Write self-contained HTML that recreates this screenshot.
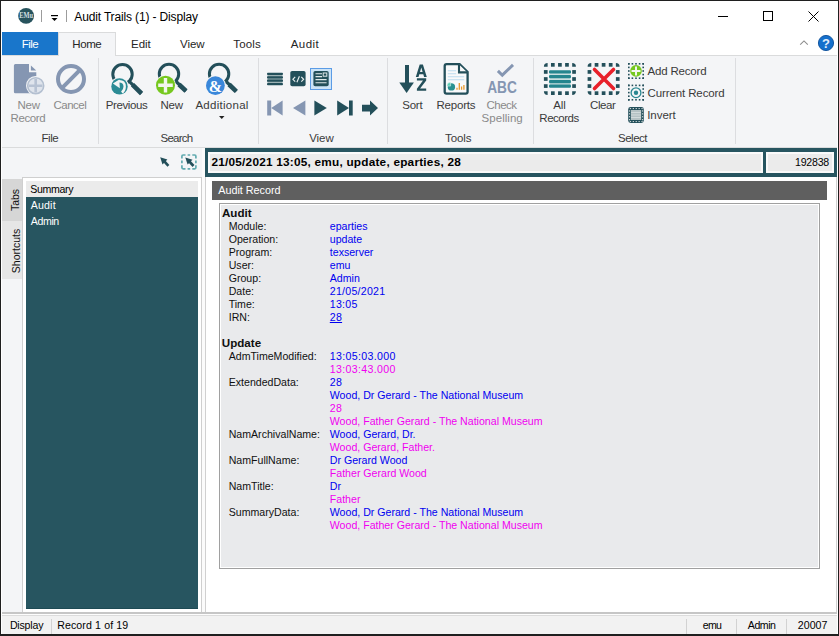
<!DOCTYPE html>
<html><head><meta charset="utf-8">
<style>
*{margin:0;padding:0;box-sizing:border-box}
html,body{width:839px;height:636px;overflow:hidden;background:#fff}
body{font-family:"Liberation Sans",sans-serif;position:relative}
.t{position:absolute;white-space:nowrap}
svg.t{overflow:visible}
</style></head><body>
<div class="t" style="left:0px;top:0px;width:839px;height:32px;background:#fff;"></div>
<svg class="t" style="left:0px;top:0px" width="40" height="30" viewBox="0 0 40 30"><circle cx="26.1" cy="15.9" r="7.9" fill="#27535d"/><text x="19.2" y="17.9" font-family="Liberation Serif" font-size="7.2" font-weight="bold" fill="#d3dfe1" textLength="13.8" lengthAdjust="spacingAndGlyphs">EMu</text></svg>
<div class="t" style="left:41px;top:10px;width:1px;height:12px;background:#9c9c9c;"></div>
<svg class="t" style="left:50px;top:13px" width="10" height="10" viewBox="0 0 10 10"><rect x="1" y="2" width="7" height="1.2" fill="#000"/><path d="M1.5 5 L7.5 5 L4.5 8 Z" fill="#000"/></svg>
<div class="t" style="left:66px;top:10px;width:1px;height:12px;background:#9c9c9c;"></div>
<div class="t" style="left:74.30px;top:11.00px;font-size:12px;line-height:12px;letter-spacing:-0.147px;color:#000;">Audit Trails (1) - Display</div>
<div class="t" style="left:718px;top:16px;width:10px;height:1px;background:#000;"></div>
<div class="t" style="left:763px;top:11px;width:10px;height:10px;background:transparent;border:1px solid #000;"></div>
<svg class="t" style="left:808px;top:11px" width="11" height="11" viewBox="0 0 11 11"><path d="M0.5 0.5 L10.5 10.5 M10.5 0.5 L0.5 10.5" stroke="#000" stroke-width="1"/></svg>
<div class="t" style="left:2px;top:32px;width:56px;height:23px;background:#1976cb;"></div>
<div class="t" style="left:21.70px;top:39.00px;font-size:11.5px;line-height:11.5px;letter-spacing:-0.509px;color:#fff;">File</div>
<div class="t" style="left:58px;top:32px;width:58px;height:24px;background:#f4f5f7;border:1px solid #dadbdc;border-bottom:none;"></div>
<div class="t" style="left:72.30px;top:39.00px;font-size:11.5px;line-height:11.5px;letter-spacing:-0.427px;color:#262626;">Home</div>
<div class="t" style="left:131.00px;top:39.00px;font-size:11.5px;line-height:11.5px;letter-spacing:-0.038px;color:#262626;">Edit</div>
<div class="t" style="left:180.00px;top:39.00px;font-size:11.5px;line-height:11.5px;letter-spacing:-0.016px;color:#262626;">View</div>
<div class="t" style="left:233.30px;top:39.00px;font-size:11.5px;line-height:11.5px;letter-spacing:0.140px;color:#262626;">Tools</div>
<div class="t" style="left:290.70px;top:39.00px;font-size:11.5px;line-height:11.5px;letter-spacing:0.448px;color:#262626;">Audit</div>
<svg class="t" style="left:0px;top:0px" width="839" height="60" viewBox="0 0 839 60"><path d="M800.2 44.6 L804 40.9 L807.8 44.6" stroke="#8c8c8c" stroke-width="1.1" fill="none"/></svg>
<svg class="t" style="left:817px;top:35px" width="18" height="18" viewBox="0 0 18 18"><circle cx="9" cy="8" r="7.6" fill="#1570cc" stroke="#0c4f9a" stroke-width="0.9"/><text x="9" y="12.6" font-size="13" font-weight="bold" fill="#e3eefa" text-anchor="middle">?</text></svg>
<div class="t" style="left:2px;top:55px;width:835px;height:93px;background:#f4f5f7;border-top:1px solid #dadbdc;border-bottom:1px solid #dadbdc;"></div>
<div class="t" style="left:1px;top:32px;width:1px;height:603px;background:#fff;"></div>
<div class="t" style="left:837px;top:32px;width:1px;height:603px;background:#fff;"></div>
<div class="t" style="left:98px;top:58px;width:1px;height:86px;background:#dcdde0;"></div>
<div class="t" style="left:258px;top:58px;width:1px;height:86px;background:#dcdde0;"></div>
<div class="t" style="left:387px;top:58px;width:1px;height:86px;background:#dcdde0;"></div>
<div class="t" style="left:533px;top:58px;width:1px;height:86px;background:#dcdde0;"></div>
<div class="t" style="left:735px;top:58px;width:1px;height:86px;background:#dcdde0;"></div>
<div class="t" style="left:59px;top:55px;width:56px;height:1px;background:#f4f5f7;"></div>
<svg class="t" style="left:12px;top:62px" width="36" height="36" viewBox="0 0 36 36"><path d="M3.4 2 H17 V10.2 H24.3 V31.2 H3.4 Q1.9 31.2 1.9 29.7 V3.5 Q1.9 2 3.4 2 Z" fill="#8596b2"/>
<path d="M18.9 3.4 L24.2 8.5 H18.9 Z" fill="#8596b2"/>
<circle cx="23.7" cy="23.7" r="9.7" fill="#f4f5f7"/><circle cx="23.7" cy="23.7" r="8" fill="#dfe4ec" stroke="#b3bfd0" stroke-width="1.6"/>
<path d="M23.7 17 V30.4 M17 23.7 H30.4" stroke="#b7c2d3" stroke-width="2.6"/></svg>
<svg class="t" style="left:55px;top:63px" width="32" height="32" viewBox="0 0 32 32"><circle cx="16" cy="16" r="13" fill="none" stroke="#8596b2" stroke-width="4"/><path d="M7.2 24.8 L24.8 7.2" stroke="#8596b2" stroke-width="4"/></svg>
<div class="t" style="left:17.60px;top:100.00px;font-size:11.5px;line-height:11.5px;letter-spacing:-0.317px;color:#8a8a8a;">New</div>
<div class="t" style="left:10.50px;top:113.00px;font-size:11.5px;line-height:11.5px;letter-spacing:-0.395px;color:#8a8a8a;">Record</div>
<div class="t" style="left:53.50px;top:100.00px;font-size:11.5px;line-height:11.5px;letter-spacing:-0.520px;color:#8a8a8a;">Cancel</div>
<div class="t" style="left:41.50px;top:133.00px;font-size:11.5px;line-height:11.5px;letter-spacing:-0.475px;color:#3a3a3a;">File</div>
<svg class="t" style="left:0px;top:0px" width="260" height="100" viewBox="0 0 260 100"><circle cx="122.5" cy="74.2" r="9.7" fill="none" stroke="#234f5a" stroke-width="3"/><path d="M128.5 80.7 L141.5 93.5" stroke="#234f5a" stroke-width="3.2"/><path d="M132.5 84.7 L141.5 93.5" stroke="#234f5a" stroke-width="4.6"/><circle cx="119.5" cy="86.4" r="9.3" fill="#f4f5f7"/><circle cx="119.5" cy="86.4" r="8.2" fill="#2b8b95"/><path d="M112.9 83.5 L119.3 79.6 L119.8 88.3 Z" fill="#f4f6f6"/><path d="M119 81.3 Q124.6 81.2 124.7 86.6 Q124.6 90.6 121.8 92.6" fill="none" stroke="#f4f6f6" stroke-width="2.4"/></svg>
<svg class="t" style="left:0px;top:0px" width="260" height="100" viewBox="0 0 260 100"><circle cx="169" cy="74" r="9.7" fill="none" stroke="#234f5a" stroke-width="3"/><path d="M175 80.5 L186 91" stroke="#234f5a" stroke-width="3.2"/><path d="M179 84.5 L186 91" stroke="#234f5a" stroke-width="4.6"/><circle cx="165.5" cy="85.3" r="10.5" fill="#f4f5f7"/><circle cx="165.5" cy="85.3" r="9.5" fill="#76c81f"/><path d="M165.5 78 V92.6 M158.2 85.3 H172.8" stroke="#f3f6ef" stroke-width="3.4"/></svg>
<svg class="t" style="left:0px;top:0px" width="260" height="100" viewBox="0 0 260 100"><circle cx="219.1" cy="74" r="9.7" fill="none" stroke="#234f5a" stroke-width="3"/><path d="M225.1 80.5 L236.3 91.4" stroke="#234f5a" stroke-width="3.2"/><path d="M229.1 84.5 L236.3 91.4" stroke="#234f5a" stroke-width="4.6"/><circle cx="215.4" cy="85.6" r="10.4" fill="#f4f5f7"/><circle cx="215.4" cy="85.6" r="9.4" fill="#3a87da"/><text x="215.4" y="91.5" font-family="Liberation Serif" font-size="16" font-weight="bold" fill="#fff" text-anchor="middle">&amp;</text></svg>
<div class="t" style="left:105.70px;top:100.00px;font-size:11.5px;line-height:11.5px;letter-spacing:-0.392px;color:#3a3a3a;">Previous</div>
<div class="t" style="left:160.50px;top:100.00px;font-size:11.5px;line-height:11.5px;letter-spacing:-0.267px;color:#3a3a3a;">New</div>
<div class="t" style="left:195.40px;top:100.00px;font-size:11.5px;line-height:11.5px;letter-spacing:0.277px;color:#3a3a3a;">Additional</div>
<svg class="t" style="left:218px;top:115px" width="8" height="5" viewBox="0 0 8 5"><path d="M1 1 H6.5 L3.75 4 Z" fill="#222"/></svg>
<div class="t" style="left:160.50px;top:133.00px;font-size:11.5px;line-height:11.5px;letter-spacing:-0.746px;color:#3a3a3a;">Search</div>
<svg class="t" style="left:0px;top:0px" width="400" height="130" viewBox="0 0 400 130"><rect x="267.5" y="74.5" width="15" height="9" fill="#9db2b5"/><rect x="267" y="72.8" width="16" height="2.2" rx="0.9" fill="#234f5a"/><rect x="267" y="76.2" width="16" height="2.2" rx="0.9" fill="#234f5a"/><rect x="267" y="79.6" width="16" height="2.2" rx="0.9" fill="#234f5a"/><rect x="267" y="83" width="16" height="2.2" rx="0.9" fill="#234f5a"/><rect x="290.3" y="71" width="15.3" height="15.3" rx="1.8" fill="#234f5a"/><path d="M295.2 76.9 L292.9 79.3 L295.2 81.7 M299.4 76.2 L296.9 82.3 M301.3 76.9 L303.6 79.3 L301.3 81.7" fill="none" stroke="#e8efef" stroke-width="1.15"/><rect x="310.5" y="68.5" width="21" height="21" fill="#cce3f7" stroke="#5b9ce6" stroke-width="1"/><rect x="313.4" y="71" width="15.3" height="15.3" rx="1.8" fill="#234f5a"/><path d="M315.5 73.8 H322 M315.5 76.6 H322 M315.5 79.6 H326.6 M315.5 82.8 H326.6" stroke="#e0e8e9" stroke-width="1.1"/><rect x="323.2" y="73" width="3.6" height="3.2" fill="none" stroke="#e0e8e9" stroke-width="1"/><rect x="267.2" y="100.5" width="4" height="15" fill="#8596b2"/><path d="M271.2 108 L282.6 100.5 V115.5 Z" fill="#8596b2"/><path d="M293 108 L305.4 100.5 V115.5 Z" fill="#8596b2"/><path d="M326.8 108 L314.4 100.5 V115.5 Z" fill="#234f5a"/><path d="M349 108 L337.2 100.5 V115.5 Z" fill="#234f5a"/><rect x="349" y="100.5" width="3.7" height="15" fill="#234f5a"/><path d="M362 104.7 H370 V100.5 L378 108 L370 115.5 V111.4 H362 Z" fill="#234f5a"/></svg>
<div class="t" style="left:309.20px;top:133.00px;font-size:11.5px;line-height:11.5px;letter-spacing:-0.049px;color:#3a3a3a;">View</div>
<svg class="t" style="left:0px;top:0px" width="540" height="130" viewBox="0 0 540 130"><rect x="405" y="65" width="4" height="19" fill="#234f5a"/><path d="M399.3 82.5 H413.9 L406.6 93 Z" fill="#234f5a"/><path fill-rule="evenodd" d="M415.8 76.9 L419.7 64.4 H422.9 L426.8 76.9 H424.1 L423.3 74.3 H419.3 L418.5 76.9 Z M420 71.9 H422.6 L421.3 67.4 Z" fill="#234f5a"/><path d="M416.9 78.3 H426.2 V80.4 L420.1 88.6 H426.2 V90.8 H416.9 V88.7 L423 80.5 H416.9 Z" fill="#234f5a"/><path d="M446.6 64.1 H459.6 L467.6 72 V91.8 Q467.6 93.7 465.7 93.7 H446.6 Q444.7 93.7 444.7 91.8 V66 Q444.7 64.1 446.6 64.1 Z" fill="#f8f9fa" stroke="#234f5a" stroke-width="2.3"/><path d="M459 64.5 V72.4 H467.4" fill="#f8f9fa" stroke="#234f5a" stroke-width="2.1"/><path d="M447.8 70.8 H456.2 M447.8 73.8 H456.2 M447.8 76.8 H464.2 M447.8 79.8 H464.2" stroke="#bcdcf0" stroke-width="1.1"/><circle cx="451.4" cy="86.9" r="3.7" fill="#2a9191"/><path d="M450.6 86.1 V82.3 A3.7 3.7 0 0 0 446.9 86.1 Z" fill="#5ccfb6" stroke="#f8f9fa" stroke-width="0.5"/><path d="M457 89.8 V87.8 M459.3 89.8 V83 M461.6 89.8 V86.4 M463.9 89.8 V85" stroke="#e8992e" stroke-width="1.3"/><path d="M497.9 70.9 L502.3 75.2 L513 64.9" fill="none" stroke="#8596b2" stroke-width="3"/><text x="487.2" y="92.9" font-size="15.8" font-weight="bold" fill="#8596b2" textLength="29.7" lengthAdjust="spacingAndGlyphs">ABC</text></svg>
<div class="t" style="left:402.20px;top:100.00px;font-size:11.5px;line-height:11.5px;letter-spacing:-0.197px;color:#3a3a3a;">Sort</div>
<div class="t" style="left:436.50px;top:100.00px;font-size:11.5px;line-height:11.5px;letter-spacing:-0.210px;color:#3a3a3a;">Reports</div>
<div class="t" style="left:486.60px;top:100.00px;font-size:11.5px;line-height:11.5px;letter-spacing:-0.554px;color:#8a8a8a;">Check</div>
<div class="t" style="left:481.60px;top:113.00px;font-size:11.5px;line-height:11.5px;letter-spacing:0.026px;color:#8a8a8a;">Spelling</div>
<div class="t" style="left:445.00px;top:133.00px;font-size:11.5px;line-height:11.5px;letter-spacing:-0.110px;color:#3a3a3a;">Tools</div>
<svg class="t" style="left:0px;top:0px" width="660" height="130" viewBox="0 0 660 130"><rect x="550.98" y="63" width="3.7" height="3.7" fill="#234f5a"/><rect x="550.98" y="91.3" width="3.7" height="3.7" fill="#234f5a"/><rect x="558.05" y="63" width="3.7" height="3.7" fill="#234f5a"/><rect x="558.05" y="91.3" width="3.7" height="3.7" fill="#234f5a"/><rect x="565.12" y="63" width="3.7" height="3.7" fill="#234f5a"/><rect x="565.12" y="91.3" width="3.7" height="3.7" fill="#234f5a"/><rect x="543.9" y="70.08" width="3.7" height="3.7" fill="#234f5a"/><rect x="572.1999999999999" y="70.08" width="3.7" height="3.7" fill="#234f5a"/><rect x="543.9" y="77.15" width="3.7" height="3.7" fill="#234f5a"/><rect x="572.1999999999999" y="77.15" width="3.7" height="3.7" fill="#234f5a"/><rect x="543.9" y="84.22" width="3.7" height="3.7" fill="#234f5a"/><rect x="572.1999999999999" y="84.22" width="3.7" height="3.7" fill="#234f5a"/><path d="M543.9 66.7 Q543.9 63 547.6 63 L547.6 66.7 Z" fill="#234f5a"/><path d="M575.9 66.7 Q575.9 63 572.1999999999999 63 L572.1999999999999 66.7 Z" fill="#234f5a"/><path d="M543.9 91.3 Q543.9 95 547.6 95 L547.6 91.3 Z" fill="#234f5a"/><path d="M575.9 91.3 Q575.9 95 572.1999999999999 95 L572.1999999999999 91.3 Z" fill="#234f5a"/><rect x="549.5" y="72" width="21" height="14" fill="#c9dfdf"/><rect x="549" y="70.2" width="22" height="3.3" rx="1.2" fill="#25868e"/><rect x="549" y="75" width="22" height="3.3" rx="1.2" fill="#25868e"/><rect x="549" y="80" width="22" height="3.3" rx="1.2" fill="#25868e"/><rect x="549" y="84.4" width="22" height="3.3" rx="1.2" fill="#25868e"/><rect x="594.68" y="63" width="3.7" height="3.7" fill="#234f5a"/><rect x="594.68" y="91.3" width="3.7" height="3.7" fill="#234f5a"/><rect x="601.75" y="63" width="3.7" height="3.7" fill="#234f5a"/><rect x="601.75" y="91.3" width="3.7" height="3.7" fill="#234f5a"/><rect x="608.83" y="63" width="3.7" height="3.7" fill="#234f5a"/><rect x="608.83" y="91.3" width="3.7" height="3.7" fill="#234f5a"/><rect x="587.6" y="70.08" width="3.7" height="3.7" fill="#234f5a"/><rect x="615.9" y="70.08" width="3.7" height="3.7" fill="#234f5a"/><rect x="587.6" y="77.15" width="3.7" height="3.7" fill="#234f5a"/><rect x="615.9" y="77.15" width="3.7" height="3.7" fill="#234f5a"/><rect x="587.6" y="84.22" width="3.7" height="3.7" fill="#234f5a"/><rect x="615.9" y="84.22" width="3.7" height="3.7" fill="#234f5a"/><path d="M587.6 66.7 Q587.6 63 591.3000000000001 63 L591.3000000000001 66.7 Z" fill="#234f5a"/><path d="M619.6 66.7 Q619.6 63 615.9 63 L615.9 66.7 Z" fill="#234f5a"/><path d="M587.6 91.3 Q587.6 95 591.3000000000001 95 L591.3000000000001 91.3 Z" fill="#234f5a"/><path d="M619.6 91.3 Q619.6 95 615.9 95 L615.9 91.3 Z" fill="#234f5a"/><path d="M594.5 69.5 L613.5 88.5 M613.5 69.5 L594.5 88.5" stroke="#e8202a" stroke-width="3.6" stroke-linecap="round"/><rect x="628.00" y="63" width="1.6" height="1.6" fill="#234f5a"/><rect x="628.00" y="77.4" width="1.6" height="1.6" fill="#234f5a"/><rect x="631.60" y="63" width="1.6" height="1.6" fill="#234f5a"/><rect x="631.60" y="77.4" width="1.6" height="1.6" fill="#234f5a"/><rect x="635.20" y="63" width="1.6" height="1.6" fill="#234f5a"/><rect x="635.20" y="77.4" width="1.6" height="1.6" fill="#234f5a"/><rect x="638.80" y="63" width="1.6" height="1.6" fill="#234f5a"/><rect x="638.80" y="77.4" width="1.6" height="1.6" fill="#234f5a"/><rect x="642.40" y="63" width="1.6" height="1.6" fill="#234f5a"/><rect x="642.40" y="77.4" width="1.6" height="1.6" fill="#234f5a"/><rect x="628" y="63.00" width="1.6" height="1.6" fill="#234f5a"/><rect x="642.4" y="63.00" width="1.6" height="1.6" fill="#234f5a"/><rect x="628" y="66.60" width="1.6" height="1.6" fill="#234f5a"/><rect x="642.4" y="66.60" width="1.6" height="1.6" fill="#234f5a"/><rect x="628" y="70.20" width="1.6" height="1.6" fill="#234f5a"/><rect x="642.4" y="70.20" width="1.6" height="1.6" fill="#234f5a"/><rect x="628" y="73.80" width="1.6" height="1.6" fill="#234f5a"/><rect x="642.4" y="73.80" width="1.6" height="1.6" fill="#234f5a"/><rect x="628" y="77.40" width="1.6" height="1.6" fill="#234f5a"/><rect x="642.4" y="77.40" width="1.6" height="1.6" fill="#234f5a"/><circle cx="636" cy="70.9" r="5.8" fill="#76c81f"/><path d="M636 66.4 V75.4 M631.5 70.9 H640.5" stroke="#f3f6ef" stroke-width="2"/><rect x="628.00" y="84.6" width="1.6" height="1.6" fill="#234f5a"/><rect x="628.00" y="99.0" width="1.6" height="1.6" fill="#234f5a"/><rect x="631.60" y="84.6" width="1.6" height="1.6" fill="#234f5a"/><rect x="631.60" y="99.0" width="1.6" height="1.6" fill="#234f5a"/><rect x="635.20" y="84.6" width="1.6" height="1.6" fill="#234f5a"/><rect x="635.20" y="99.0" width="1.6" height="1.6" fill="#234f5a"/><rect x="638.80" y="84.6" width="1.6" height="1.6" fill="#234f5a"/><rect x="638.80" y="99.0" width="1.6" height="1.6" fill="#234f5a"/><rect x="642.40" y="84.6" width="1.6" height="1.6" fill="#234f5a"/><rect x="642.40" y="99.0" width="1.6" height="1.6" fill="#234f5a"/><rect x="628" y="84.60" width="1.6" height="1.6" fill="#234f5a"/><rect x="642.4" y="84.60" width="1.6" height="1.6" fill="#234f5a"/><rect x="628" y="88.20" width="1.6" height="1.6" fill="#234f5a"/><rect x="642.4" y="88.20" width="1.6" height="1.6" fill="#234f5a"/><rect x="628" y="91.80" width="1.6" height="1.6" fill="#234f5a"/><rect x="642.4" y="91.80" width="1.6" height="1.6" fill="#234f5a"/><rect x="628" y="95.40" width="1.6" height="1.6" fill="#234f5a"/><rect x="642.4" y="95.40" width="1.6" height="1.6" fill="#234f5a"/><rect x="628" y="99.00" width="1.6" height="1.6" fill="#234f5a"/><rect x="642.4" y="99.00" width="1.6" height="1.6" fill="#234f5a"/><circle cx="636" cy="92.7" r="4.9" fill="none" stroke="#2a8791" stroke-width="1.3"/><circle cx="636" cy="92.7" r="2.2" fill="#2a8791"/><rect x="628.2" y="107" width="15.6" height="16" rx="2.4" fill="#234f5a"/><rect x="630.8" y="110" width="10.4" height="10" fill="#b4c1c3"/><path d="M631 112.5 H641 M631 115 H641 M631 117.5 H641" stroke="#d2dadb" stroke-width="1"/></svg>
<svg class="t" style="left:0px;top:0px" width="660" height="130" viewBox="0 0 660 130"><rect x="629.80" y="108" width="1.3" height="1.1" fill="#c8d2d3"/><rect x="629.80" y="121" width="1.3" height="1.1" fill="#c8d2d3"/><rect x="632.70" y="108" width="1.3" height="1.1" fill="#c8d2d3"/><rect x="632.70" y="121" width="1.3" height="1.1" fill="#c8d2d3"/><rect x="635.60" y="108" width="1.3" height="1.1" fill="#c8d2d3"/><rect x="635.60" y="121" width="1.3" height="1.1" fill="#c8d2d3"/><rect x="638.50" y="108" width="1.3" height="1.1" fill="#c8d2d3"/><rect x="638.50" y="121" width="1.3" height="1.1" fill="#c8d2d3"/><rect x="641.40" y="108" width="1.3" height="1.1" fill="#c8d2d3"/><rect x="641.40" y="121" width="1.3" height="1.1" fill="#c8d2d3"/><rect x="629" y="110.30" width="1.1" height="1.3" fill="#c8d2d3"/><rect x="642" y="110.30" width="1.1" height="1.3" fill="#c8d2d3"/><rect x="629" y="113.20" width="1.1" height="1.3" fill="#c8d2d3"/><rect x="642" y="113.20" width="1.1" height="1.3" fill="#c8d2d3"/><rect x="629" y="116.10" width="1.1" height="1.3" fill="#c8d2d3"/><rect x="642" y="116.10" width="1.1" height="1.3" fill="#c8d2d3"/><rect x="629" y="119.00" width="1.1" height="1.3" fill="#c8d2d3"/><rect x="642" y="119.00" width="1.1" height="1.3" fill="#c8d2d3"/></svg>
<div class="t" style="left:553.30px;top:100.00px;font-size:11.5px;line-height:11.5px;letter-spacing:-0.138px;color:#3a3a3a;">All</div>
<div class="t" style="left:539.30px;top:113.00px;font-size:11.5px;line-height:11.5px;letter-spacing:-0.471px;color:#3a3a3a;">Records</div>
<div class="t" style="left:590.00px;top:100.00px;font-size:11.5px;line-height:11.5px;letter-spacing:-0.421px;color:#3a3a3a;">Clear</div>
<div class="t" style="left:618.00px;top:133.00px;font-size:11.5px;line-height:11.5px;letter-spacing:-0.492px;color:#3a3a3a;">Select</div>
<div class="t" style="left:647.50px;top:66.00px;font-size:11.5px;line-height:11.5px;letter-spacing:-0.181px;color:#3a3a3a;">Add Record</div>
<div class="t" style="left:647.50px;top:88.00px;font-size:11.5px;line-height:11.5px;letter-spacing:-0.109px;color:#3a3a3a;">Current Record</div>
<div class="t" style="left:647.20px;top:110.00px;font-size:11.5px;line-height:11.5px;letter-spacing:-0.032px;color:#3a3a3a;">Invert</div>
<div class="t" style="left:2px;top:148px;width:200px;height:465px;background:#f4f5f7;"></div>
<svg class="t" style="left:0px;top:0px" width="200" height="175" viewBox="0 0 200 175"><path d="M160.2 157.2 L167.39999999999998 159.5 L162.5 164.39999999999998 Z" fill="#234f5a"/><path d="M163.7 160.7 L168.39999999999998 165.79999999999998" stroke="#234f5a" stroke-width="2.7"/><g fill="none" stroke="#62abb0" stroke-width="1.7"><path d="M181.9 158.6 V156.2 Q181.9 155 183.1 155 H185.5"/><path d="M192.3 155 H194.7 Q195.9 155 195.9 156.2 V158.6"/><path d="M181.9 165.2 V167.6 Q181.9 168.8 183.1 168.8 H185.5"/><path d="M192.3 168.8 H194.7 Q195.9 168.8 195.9 167.6 V165.2"/><path d="M187.6 155 H190.2 M187.6 168.8 H190.2 M181.9 160.6 V163.2 M195.9 160.6 V163.2"/></g><path d="M185.3 157.4 L192.5 159.70000000000002 L187.60000000000002 164.6 Z" fill="#234f5a"/><path d="M188.8 160.9 L193.5 166.0" stroke="#234f5a" stroke-width="2.7"/></svg>
<div class="t" style="left:2px;top:179px;width:20px;height:42px;background:#d6d6d6;"></div>
<div class="t" style="left:2px;top:221px;width:20px;height:58px;background:#e6e6e6;"></div>
<div class="t" style="left:-6.8px;top:193.5px;width:44px;height:12px;transform:rotate(-90deg);text-align:center;font-size:10.5px;line-height:12px;color:#111">Tabs</div>
<div class="t" style="left:-16.4px;top:244.6px;width:64px;height:12px;transform:rotate(-90deg);text-align:center;font-size:10.5px;line-height:12px;color:#111">Shortcuts</div>
<div class="t" style="left:22px;top:177px;width:180px;height:436px;background:#fff;border:1px solid #cfcfcf;border-bottom:none;"></div>
<div class="t" style="left:26px;top:181px;width:172px;height:16px;background:#ebebeb;"></div>
<div class="t" style="left:26px;top:197px;width:172px;height:412px;background:#275560;border-bottom:1px solid #1d4a54;"></div>
<div class="t" style="left:30.30px;top:184.00px;font-size:10.6px;line-height:10.6px;letter-spacing:-0.341px;color:#000;">Summary</div>
<div class="t" style="left:30.70px;top:200.00px;font-size:10.6px;line-height:10.6px;letter-spacing:0.186px;color:#fff;">Audit</div>
<div class="t" style="left:30.70px;top:216.00px;font-size:10.6px;line-height:10.6px;letter-spacing:-0.363px;color:#fff;">Admin</div>
<div class="t" style="left:202px;top:148px;width:3px;height:465px;background:#fbfbfb;"></div>
<div class="t" style="left:205px;top:177px;width:632px;height:435px;background:#fff;border-left:1px solid #d0d0d0;border-right:1px solid #d0d0d0;"></div>
<div class="t" style="left:837px;top:148px;width:1px;height:464px;background:#fff;"></div>
<div class="t" style="left:205px;top:148px;width:632px;height:29px;background:#275560;"></div>
<div class="t" style="left:208px;top:152px;width:555px;height:21px;background:#ebebeb;border:2px solid #fafafa;"></div>
<div class="t" style="left:766px;top:152px;width:68px;height:21px;background:#ebebeb;border:2px solid #fafafa;"></div>
<div class="t" style="left:211.50px;top:157.00px;font-size:11.8px;line-height:11.8px;color:#000;font-weight:bold;letter-spacing:0.22px;">21/05/2021 13:05, emu, update, eparties, 28</div>
<div class="t" style="left:795.10px;top:157.00px;font-size:10.6px;line-height:10.6px;letter-spacing:-0.254px;color:#000;">192838</div>
<div class="t" style="left:212px;top:181px;width:615px;height:19px;background:#5f5f5f;"></div>
<div class="t" style="left:218.30px;top:185.00px;font-size:10.8px;line-height:10.8px;letter-spacing:-0.021px;color:#fff;">Audit Record</div>
<div class="t" style="left:219px;top:203px;width:601px;height:366px;background:#e9eaec;border:1px solid #a0a0a0;box-shadow:inset 0 0 0 1px #fff;"></div>
<div class="t" style="left:222.00px;top:207.00px;font-size:11.6px;line-height:11.6px;color:#101010;font-weight:bold;">Audit</div>
<div class="t" style="left:228.70px;top:221.00px;font-size:10.6px;line-height:10.6px;color:#101010;">Module:</div>
<div class="t" style="left:329.80px;top:221.00px;font-size:10.6px;line-height:10.6px;color:#0000f0;">eparties</div>
<div class="t" style="left:228.70px;top:234.00px;font-size:10.6px;line-height:10.6px;color:#101010;">Operation:</div>
<div class="t" style="left:329.80px;top:234.00px;font-size:10.6px;line-height:10.6px;color:#0000f0;">update</div>
<div class="t" style="left:228.70px;top:247.00px;font-size:10.6px;line-height:10.6px;color:#101010;">Program:</div>
<div class="t" style="left:329.80px;top:247.00px;font-size:10.6px;line-height:10.6px;color:#0000f0;">texserver</div>
<div class="t" style="left:228.70px;top:260.00px;font-size:10.6px;line-height:10.6px;color:#101010;">User:</div>
<div class="t" style="left:329.80px;top:260.00px;font-size:10.6px;line-height:10.6px;color:#0000f0;">emu</div>
<div class="t" style="left:228.70px;top:273.00px;font-size:10.6px;line-height:10.6px;color:#101010;">Group:</div>
<div class="t" style="left:329.80px;top:273.00px;font-size:10.6px;line-height:10.6px;color:#0000f0;">Admin</div>
<div class="t" style="left:228.70px;top:286.00px;font-size:10.6px;line-height:10.6px;color:#101010;">Date:</div>
<div class="t" style="left:329.80px;top:286.00px;font-size:10.6px;line-height:10.6px;color:#0000f0;letter-spacing:0.25px;">21/05/2021</div>
<div class="t" style="left:228.70px;top:299.00px;font-size:10.6px;line-height:10.6px;color:#101010;">Time:</div>
<div class="t" style="left:329.80px;top:299.00px;font-size:10.6px;line-height:10.6px;color:#0000f0;letter-spacing:0.25px;">13:05</div>
<div class="t" style="left:228.70px;top:312.00px;font-size:10.6px;line-height:10.6px;color:#101010;">IRN:</div>
<div class="t" style="left:329.80px;top:312.00px;font-size:10.6px;line-height:10.6px;color:#0000f0;text-decoration:underline;letter-spacing:0.25px;">28</div>
<div class="t" style="left:221.80px;top:337.00px;font-size:11.6px;line-height:11.6px;color:#101010;font-weight:bold;">Update</div>
<div class="t" style="left:228.70px;top:351.00px;font-size:10.6px;line-height:10.6px;color:#101010;">AdmTimeModified:</div>
<div class="t" style="left:329.80px;top:351.00px;font-size:10.6px;line-height:10.6px;color:#0000f0;letter-spacing:0.33px;">13:05:03.000</div>
<div class="t" style="left:329.80px;top:364.00px;font-size:10.6px;line-height:10.6px;color:#f000f0;letter-spacing:0.33px;">13:03:43.000</div>
<div class="t" style="left:228.70px;top:377.00px;font-size:10.6px;line-height:10.6px;color:#101010;">ExtendedData:</div>
<div class="t" style="left:329.80px;top:377.00px;font-size:10.6px;line-height:10.6px;color:#0000f0;letter-spacing:0.33px;">28</div>
<div class="t" style="left:329.80px;top:390.00px;font-size:10.6px;line-height:10.6px;color:#0000f0;">Wood, Dr Gerard - The National Museum</div>
<div class="t" style="left:329.80px;top:403.00px;font-size:10.6px;line-height:10.6px;color:#f000f0;letter-spacing:0.33px;">28</div>
<div class="t" style="left:329.80px;top:416.00px;font-size:10.6px;line-height:10.6px;color:#f000f0;">Wood, Father Gerard - The National Museum</div>
<div class="t" style="left:228.70px;top:429.00px;font-size:10.6px;line-height:10.6px;color:#101010;">NamArchivalName:</div>
<div class="t" style="left:329.80px;top:429.00px;font-size:10.6px;line-height:10.6px;color:#0000f0;">Wood, Gerard, Dr.</div>
<div class="t" style="left:329.80px;top:442.00px;font-size:10.6px;line-height:10.6px;color:#f000f0;">Wood, Gerard, Father.</div>
<div class="t" style="left:228.70px;top:455.00px;font-size:10.6px;line-height:10.6px;color:#101010;">NamFullName:</div>
<div class="t" style="left:329.80px;top:455.00px;font-size:10.6px;line-height:10.6px;color:#0000f0;">Dr Gerard Wood</div>
<div class="t" style="left:329.80px;top:468.00px;font-size:10.6px;line-height:10.6px;color:#f000f0;">Father Gerard Wood</div>
<div class="t" style="left:228.70px;top:481.00px;font-size:10.6px;line-height:10.6px;color:#101010;">NamTitle:</div>
<div class="t" style="left:329.80px;top:481.00px;font-size:10.6px;line-height:10.6px;color:#0000f0;">Dr</div>
<div class="t" style="left:329.80px;top:494.00px;font-size:10.6px;line-height:10.6px;color:#f000f0;">Father</div>
<div class="t" style="left:228.70px;top:507.00px;font-size:10.6px;line-height:10.6px;color:#101010;">SummaryData:</div>
<div class="t" style="left:329.80px;top:507.00px;font-size:10.6px;line-height:10.6px;color:#0000f0;">Wood, Dr Gerard - The National Museum</div>
<div class="t" style="left:329.80px;top:520.00px;font-size:10.6px;line-height:10.6px;color:#f000f0;">Wood, Father Gerard - The National Museum</div>
<div class="t" style="left:2px;top:612px;width:835px;height:2px;background:#c6c6c6;"></div>
<div class="t" style="left:2px;top:614px;width:835px;height:1px;background:#fdfdfd;"></div>
<div class="t" style="left:2px;top:615px;width:835px;height:1px;background:#dcdcdc;"></div>
<div class="t" style="left:2px;top:616px;width:835px;height:18px;background:#f2f2f2;"></div>
<div class="t" style="left:51px;top:619px;width:1px;height:15px;background:#d2d2d2;"></div>
<div class="t" style="left:686px;top:619px;width:1px;height:15px;background:#d2d2d2;"></div>
<div class="t" style="left:736px;top:619px;width:1px;height:15px;background:#d2d2d2;"></div>
<div class="t" style="left:786px;top:619px;width:1px;height:15px;background:#d2d2d2;"></div>
<div class="t" style="left:9.90px;top:620.00px;font-size:10.6px;line-height:10.6px;letter-spacing:-0.193px;color:#000;">Display</div>
<div class="t" style="left:57.20px;top:620.00px;font-size:10.6px;line-height:10.6px;letter-spacing:0.113px;color:#000;">Record 1 of 19</div>
<div class="t" style="left:702.70px;top:620.00px;font-size:10.6px;line-height:10.6px;letter-spacing:-0.659px;color:#000;">emu</div>
<div class="t" style="left:747.80px;top:620.00px;font-size:10.6px;line-height:10.6px;letter-spacing:-0.463px;color:#000;">Admin</div>
<div class="t" style="left:797.80px;top:620.00px;font-size:10.6px;line-height:10.6px;letter-spacing:0.030px;color:#000;">20007</div>
<div class="t" style="left:0px;top:0px;width:839px;height:636px;background:transparent;border:1px solid #1f1f1f;border-bottom-width:2px;"></div>
</body></html>
